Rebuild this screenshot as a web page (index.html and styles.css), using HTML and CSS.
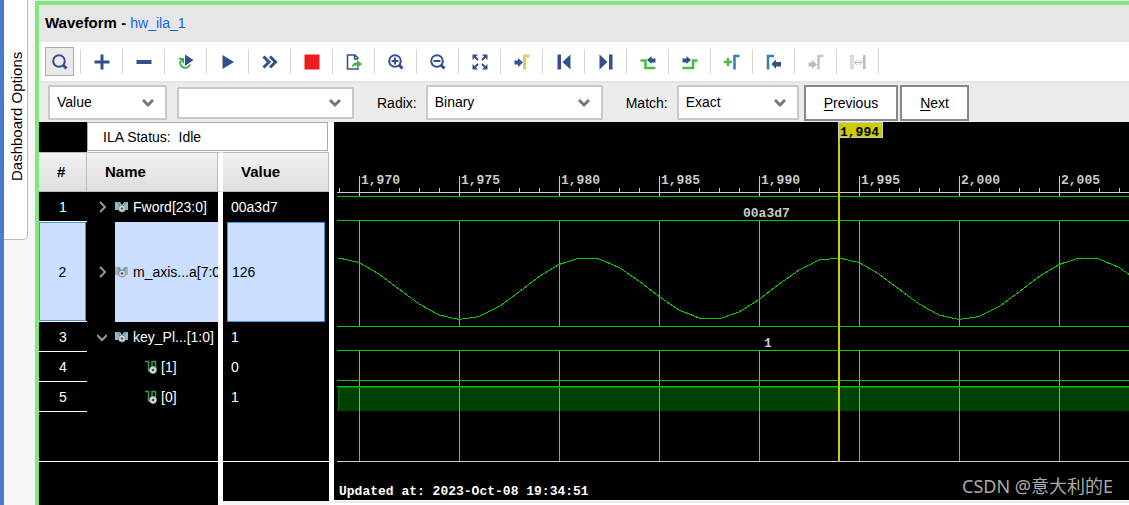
FILE: index.html
```html
<!DOCTYPE html>
<html lang="en">
<head>
<meta charset="utf-8">
<title>Waveform - hw_ila_1</title>
<link rel="stylesheet" href="styles.css">
</head>
<body>
<svg class="defs" aria-hidden="true">
  <symbol id="chevron" viewBox="0 0 14 10"><path d="M2 2l5 5 5-5" fill="none" stroke="#777" stroke-width="3"/></symbol>
  <symbol id="bus" viewBox="0 0 14 12">
    <path d="M0 1h5l2 3 2-3h4v8H0z" fill="#8fb9cb"/>
    <path d="M3 1l2 4M11 1L9 4" stroke="#5c7c8a" fill="none"/>
    <circle cx="7" cy="7.5" r="3.5" fill="#ddd" stroke="#888"/><circle cx="7" cy="7.5" r="1.3" fill="#555"/>
  </symbol>
  <symbol id="bit" viewBox="0 0 12 14">
    <path d="M0 1.5h3.500V11H6M7 9V1.500h3.500V9" fill="none" stroke="#2f9a4c" stroke-width="1.500"/>
    <circle cx="8" cy="10" r="3.400" fill="#ddd" stroke="#aaa"/><circle cx="8" cy="10" r="1.300" fill="#444"/>
  </symbol>
</svg>
<div class="app">
  <aside class="dock"><button class="dock-tab" type="button">Dashboard Options</button></aside>
  <main class="window">
    <header class="title"><h1>Waveform - <a href="#hw_ila_1">hw_ila_1</a></h1></header>

    <div class="toolbar" role="toolbar" aria-label="Waveform tools">
      <span class="tool"><button class="active" type="button" aria-label="Find"><svg viewBox="0 0 18 18"><circle cx="8" cy="8" r="5.800" class="line"/><path d="M12 12l3.500 3.500" class="line thick"/></svg></button></span>
      <span class="tool"><button type="button" aria-label="Add"><svg viewBox="0 0 18 18"><path d="M1.500 9h15M9 1.500v15" class="line thick"/></svg></button></span>
      <span class="tool"><button type="button" aria-label="Remove"><svg viewBox="0 0 18 18"><path d="M1.500 9h15" class="line heavy"/></svg></button></span>
      <span class="tool"><button type="button" aria-label="Auto re-trigger"><svg viewBox="0 0 18 18"><path d="M3.500 8a5 5 0 1 0 9.500 3.500" class="line green"/><path d="M1 5h6v6z" fill="#3fb544"/><path d="M8 1.500l8.500 5.500L8 13z" class="fill"/></svg></button></span>
      <span class="tool"><button type="button" aria-label="Run trigger"><svg viewBox="0 0 18 18"><path d="M3.500 2L15 9 3.500 16z" class="fill"/></svg></button></span>
      <span class="tool"><button type="button" aria-label="Run immediate"><svg viewBox="0 0 18 18"><path d="M2.500 3.500L8 9l-5.500 5.500M9 3.500L14.500 9 9 14.500" class="line thick"/></svg></button></span>
      <span class="tool"><button type="button" aria-label="Stop"><svg viewBox="0 0 18 18"><path d="M1.500 1.500h15v15h-15z" fill="#ee1c1c"/></svg></button></span>
      <span class="tool"><button type="button" aria-label="Export"><svg viewBox="0 0 18 18"><path d="M13 6V5L10 2H2.500v14H13v-1.500M9.500 2v4H13" class="line thin"/><path d="M7 14.500c0-4 2-5 5-5V7l5 4-5 4v-2.500c-2 0-3.500 0-5 2z" fill="#3fb544"/></svg></button></span>
      <span class="tool"><button type="button" aria-label="Zoom in"><svg viewBox="0 0 18 18"><circle cx="8" cy="8" r="5.800" class="line"/><path d="M4.500 8h7M8 4.500v7" class="line"/><path d="M12 12l3.500 3.500" class="line thick"/></svg></button></span>
      <span class="tool"><button type="button" aria-label="Zoom out"><svg viewBox="0 0 18 18"><circle cx="8" cy="8" r="5.800" class="line"/><path d="M4.500 8h7" class="line"/><path d="M12 12l3.500 3.500" class="line thick"/></svg></button></span>
      <span class="tool"><button type="button" aria-label="Zoom fit"><svg viewBox="0 0 18 18"><path d="M1.500 1.500H7L1.500 7zM16.500 1.500V7L11 1.500zM1.500 16.500V11L7 16.500zM16.500 16.500H11l5.500-5.500z" class="fill"/><path d="M3 3l4 4M15 3l-4 4M3 15l4-4M15 15l-4-4" class="line"/></svg></button></span>
      <span class="tool"><button type="button" aria-label="Go to cursor"><svg viewBox="0 0 18 18"><path d="M1.500 7.500H5V5l5 4.500L5 14v-2.500H1.500z" class="fill"/><path d="M11.500 16.500V3h5" fill="none" stroke="#e3c963" stroke-width="3"/></svg></button></span>
      <span class="tool"><button type="button" aria-label="Go to start"><svg viewBox="0 0 18 18"><path d="M2.500 1.500h3.500v15H2.500zM15.500 1.500v15L7.500 9z" class="fill"/></svg></button></span>
      <span class="tool"><button type="button" aria-label="Go to end"><svg viewBox="0 0 18 18"><path d="M12 1.500h3.500v15H12zM2.500 1.500v15l8-7.500z" class="fill"/></svg></button></span>
      <span class="tool"><button type="button" aria-label="Previous transition"><svg viewBox="0 0 18 18"><path d="M1.500 7.500h5V15h10" fill="none" stroke="#4cbb45" stroke-width="2.600"/><path d="M8 7l4.500-4v2.500h4v4h-4V11z" class="fill"/></svg></button></span>
      <span class="tool"><button type="button" aria-label="Next transition"><svg viewBox="0 0 18 18"><path d="M1.500 15H12V7.500h4.500" fill="none" stroke="#4cbb45" stroke-width="2.600"/><path d="M10 7L5.500 3v2.500h-4v4h4V11z" class="fill"/></svg></button></span>
      <span class="tool"><button type="button" aria-label="Add marker"><svg viewBox="0 0 18 18"><path d="M1 9h8M5 5v8" fill="none" stroke="#4cbb45" stroke-width="2.500"/><path d="M11.500 16.500V3h5" fill="none" stroke="#3a80b5" stroke-width="2.600"/></svg></button></span>
      <span class="tool"><button type="button" aria-label="Previous marker"><svg viewBox="0 0 18 18"><path d="M3 16.500V3h6" fill="none" stroke="#3a80b5" stroke-width="2.600"/><path d="M6.500 11L11 6.500V9h5v4.500h-5V16z" class="fill"/></svg></button></span>
      <span class="tool"><button type="button" aria-label="Next marker" disabled><svg viewBox="0 0 18 18"><path d="M1.500 9.500H5V7l5 4.500L5 16v-2.500H1.500z" fill="#bbb"/><path d="M11.500 16.500V3h5" fill="none" stroke="#c4c4c4" stroke-width="2.600"/></svg></button></span>
      <span class="tool"><button type="button" aria-label="Swap cursors" disabled><svg viewBox="0 0 18 18"><path d="M2 2.500h2v13H2zM5.500 9.500h7M8 7L5.500 9.500 8 12M10.500 7l2.500 2.500-2.500 2.500" fill="none" stroke="#bbb"/><path d="M14 2h2.500v14H14z" fill="#bbb"/></svg></button></span>
    </div>

    <form class="search">
      <span class="combo by"><select aria-label="Search by"><option>Value</option></select><svg><use href="#chevron"/></svg></span>
      <span class="combo text"><select aria-label="Search value"><option></option></select><svg><use href="#chevron"/></svg></span>
      <label for="radix">Radix:</label>
      <span class="combo radix"><select id="radix"><option>Binary</option></select><svg><use href="#chevron"/></svg></span>
      <label for="match">Match:</label>
      <span class="combo match"><select id="match"><option>Exact</option></select><svg><use href="#chevron"/></svg></span>
      <span class="steps"><button type="button"><u>P</u>revious</button><button type="button"><u>N</u>ext</button></span>
    </form>

    <div class="panes">
      <section class="signals">
        <p class="status">ILA Status:&nbsp; Idle</p>
        <table>
          <colgroup><col class="c-num"><col class="c-name"><col class="c-value"></colgroup>
          <thead><tr><th scope="col">#</th><th scope="col">Name</th><th scope="col">Value</th></tr></thead>
          <tbody>
            <tr><td>1</td><td><div class="name"><svg class="twist" viewBox="0 0 10 12"><path d="M3 1l5 5-5 5"/></svg><span><svg class="bus"><use href="#bus"/></svg>Fword[23:0]</span></div></td><td>00a3d7</td></tr>
            <tr class="selected"><td><div class="cell">2</div></td><td><div class="name"><svg class="twist" viewBox="0 0 10 12"><path d="M3 1l5 5-5 5"/></svg><span><svg class="bus"><use href="#bus"/></svg>m_axis...a[7:0]</span></div></td><td><div class="cell">126</div></td></tr>
            <tr><td>3</td><td><div class="name"><svg class="twist" viewBox="0 0 10 12"><path d="M0 4l5 5 5-5"/></svg><span><svg class="bus"><use href="#bus"/></svg>key_Pl...[1:0]</span></div></td><td>1</td></tr>
            <tr><td>4</td><td><div class="name child"><span><svg class="bit"><use href="#bit"/></svg>[1]</span></div></td><td>0</td></tr>
            <tr><td>5</td><td><div class="name child"><span><svg class="bit"><use href="#bit"/></svg>[0]</span></div></td><td>1</td></tr>
            <tr class="rest"><td></td><td></td><td></td></tr>
            <tr class="foot"><td></td><td></td><td></td></tr>
          </tbody>
        </table>
      </section>

      <section class="wave" aria-label="Waveform">
        <svg class="plot">
          <defs>
            <pattern id="ticks" x="5" y="66" width="20" height="5" patternUnits="userSpaceOnUse"><path d="M0 0h1v5H0z" fill="#ccc"/></pattern>
            <pattern id="majors" x="25" y="0" width="100" height="378" patternUnits="userSpaceOnUse"><path d="M0 54h1v20H0z" fill="#ccc"/><path d="M0 99h1v105H0zM0 229h1v110H0z" fill="#999"/></pattern>
            <pattern id="sine" x="5" y="0" width="500" height="378" patternUnits="userSpaceOnUse">
              <polyline class="trace" points="0,136 20,140.500 40,152 60,167 80,182 100,193 120,197.500 140,194.500 160,184.500 180,170 200,154.500 220,142.500 240,136 260,137 280,145.500 300,159 320,174.500 340,188 360,196 380,197 400,190 420,177.500 440,162 460,148 480,138 500,136"/>
            </pattern>
          </defs>
          <rect x="4" y="66" width="100%" height="5" fill="url(#ticks)"/>
          <rect x="3" y="70" width="100%" height="1" fill="#ccc"/>
          <rect x="4" y="265" width="100%" height="24" fill="#004000"/>
          <rect x="4" y="0" width="100%" height="340" fill="url(#majors)"/>
          <rect x="4" y="0" width="100%" height="340" fill="url(#sine)"/>
          <g fill="#007000">
            <rect x="4" y="265" width="100%" height="1"/><rect x="4" y="265" width="1" height="24"/>
          </g>
          <g fill="#00cc00">
            <rect x="3" y="74" width="100%" height="1"/><rect x="3" y="98" width="100%" height="1"/>
            <rect x="3" y="204" width="100%" height="1"/><rect x="3" y="228" width="100%" height="1"/>
            <rect x="3" y="258" width="100%" height="1"/><rect x="3" y="264" width="100%" height="1"/>
          </g>
          <rect x="3" y="339" width="100%" height="1" fill="#ccc"/>
          <g class="scale">
            <text x="27" y="62">1,970</text><text x="127" y="62">1,975</text><text x="227" y="62">1,980</text><text x="327" y="62">1,985</text><text x="427" y="62">1,990</text><text x="527" y="62">1,995</text><text x="627" y="62">2,000</text><text x="727" y="62">2,005</text>
            <text x="409" y="95">00a3d7</text><text x="430" y="225">1</text>
          </g>
          <rect x="504" y="0" width="2" height="340" fill="#cccc00"/>
          <path d="M504 0h45v16h-45z" fill="#ccc"/><path d="M505 1h43v14h-43z" fill="#cccc00"/>
          <text x="506" y="14" class="flag">1,994</text>
          <text x="5" y="373" class="updated">Updated at: 2023-Oct-08 19:34:51</text>
        </svg>
        <span class="credit">CSDN @意大利的E</span>
      </section>
    </div>
  </main>
</div>
</body>
</html>
```

FILE: styles.css
```css
* { box-sizing: border-box; }
body {
  margin: 0;
  background: #f7f7f7;
  color: #000;
  font: 14px/20px "Liberation Sans", Arial, sans-serif;
  overflow: hidden;
}
button, select { font: inherit; color: inherit; margin: 0; }
.defs { display: none; }

.app { display: flex; min-height: 100vh; border-left: 4px solid #4a7acb; }
.dock { flex: none; width: 31px; }
.dock-tab {
  width: 24px;
  height: 240px;
  padding: 7px 2px 0 0;
  border: 1px solid #bbb;
  border-width: 1px 0 0 1px;
  border-radius: 5px 0 0 0;
  background: #fff;
  font-size: 15px;
  line-height: 20px;
  text-align: center;
  writing-mode: vertical-rl;
  transform: rotate(180deg);
}
.window {
  flex: 1;
  min-width: 0;
  margin-top: 1px;
  border: solid #7eea78;
  border-width: 4px 0 0 4px;
  background: #fff;
}

.title { background: #e6e6e6; padding: 8px 6px 9px; }
.title h1 { margin: 0; font-size: 15px; line-height: 20px; }
.title a { color: #1560f0; font-weight: normal; text-decoration: none; font-size: 14px; }

.toolbar { display: flex; height: 39px; align-items: center; }
.tool {
  display: flex;
  align-items: center;
  justify-content: center;
  width: 42px;
  height: 25px;
  border-right: 1px solid #d4d4d4;
}
.tool button {
  flex: none;
  display: grid;
  place-items: center;
  width: 29px;
  height: 29px;
  padding: 0;
  border: 1px solid transparent;
  background: none;
}
.tool .active { background: #e9e9e9; border-color: #aaa; }
.tool svg { width: 18px; height: 18px; }
.line { fill: none; stroke: #34508a; stroke-width: 2; }
.line.thick { stroke-width: 3; }
.line.heavy { stroke-width: 4; }
.line.thin { stroke-width: 1.5; }
.line.green { stroke: #3fb544; }
.fill { fill: #34508a; }

.search {
  display: flex;
  align-items: center;
  height: 41px;
  padding: 0 9px;
  border-top: 2px solid #e4e4e4;
  background: #ececec;
}
.combo { display: grid; align-items: center; height: 35px; }
.combo select {
  grid-area: 1 / 1;
  width: 100%;
  height: 100%;
  padding: 0 24px 2px 7px;
  border: 2px solid #c8c8c8;
  border-radius: 1px;
  background: #fff;
  appearance: none;
}
.combo svg {
  grid-area: 1 / 1;
  justify-self: end;
  width: 14px;
  height: 10px;
  margin-right: 12px;
  pointer-events: none;
}
.by { width: 119px; }
.text { width: 177px; height: 32px; margin: 0 23px 0 10px; }
.radix { width: 177px; margin: 0 23px 0 9px; }
.match { width: 122px; margin: 0 5px 0 9px; }
.steps { display: flex; gap: 2px; }
.steps button {
  height: 36px;
  padding: 0 18px;
  border: 2px solid #888;
  background: #fff;
}
.steps u { text-underline-offset: 2px; }

.panes { display: flex; align-items: flex-start; }
.signals { flex: none; width: 295px; background: linear-gradient(#000, #000) 0 0 / 48px 30px no-repeat; }
.status {
  margin: 0 6px 1px 48px;
  padding: 4px 15px 3px;
  border: 1px solid #aaa;
}
.signals table {
  width: 290px;
  table-layout: fixed;
  border-collapse: separate;
  border-spacing: 0;
  background: #000;
  color: #fff;
}
.c-num { width: 48px; }
.c-name { width: 136px; }
.c-value { width: 106px; }
.signals th {
  height: 40px;
  padding: 0 18px;
  border: 1px solid #bbb;
  border-left-width: 0;
  background: linear-gradient(#f2f2f3, #dedee1) padding-box;
  color: #000;
  font-size: 15px;
  text-align: left;
}
.signals th:nth-child(2) { box-shadow: inset -1px 0 #bbb; }
.signals td { height: 30px; padding: 0 8px; }
.signals tr > :nth-child(2) { border-right: 5px solid #fff; }
.signals td:nth-child(2) { padding: 0; overflow: hidden; }
.signals td:first-child { padding: 0; border-bottom: 1px solid #fff; text-align: center; }
.name { display: flex; align-items: center; height: 100%; padding-left: 10px; white-space: nowrap; }
.name span { display: flex; align-items: center; height: 100%; margin-left: 8px; gap: 4px; flex: 1; }
.name.child { padding-left: 50px; }
.name svg { flex: none; }
.twist { width: 10px; height: 12px; fill: none; stroke: #999; stroke-width: 2; }
.bus { width: 14px; height: 12px; }
.bit { width: 12px; height: 14px; }
.selected td { height: 100px; color: #000; }
.selected .name { height: 100px; }
.selected .name span { background: #cadeff; }
.selected .cell {
  display: flex;
  align-items: center;
  height: 100px;
  padding-left: 4px;
  border: 1px solid #4b94cf;
  background: #cadeff;
}
.selected td:first-child .cell { height: 99px; margin-right: 1px; padding: 0; justify-content: center; }
.selected td:last-child { padding: 0 4px; }
.signals .rest td { height: 50px; border-bottom: 1px solid #fff; }
.signals .foot td { height: 43px; border-bottom: 0; }
.signals .foot td:last-child { border-bottom: 4px solid #f5f5f5; }

.wave { position: relative; flex: 1; min-width: 0; border-bottom: 2px solid #e8e8e8; }
.plot {
  display: block;
  width: 100%;
  height: 379px;
  border-bottom: 1px solid #fff;
  background: #000;
  font: bold 13px "Liberation Mono", monospace;
}
.plot rect, .trace { shape-rendering: crispEdges; }
.trace { fill: none; stroke: #0c0; }
.scale { fill: #ccc; }
.flag { fill: #000; }
.updated { fill: #fff; }
.credit {
  position: absolute;
  right: 16px;
  bottom: 1px;
  color: #aaa;
  font: 18px/28px "Noto Sans", "Noto Sans CJK SC", sans-serif;
}
```
